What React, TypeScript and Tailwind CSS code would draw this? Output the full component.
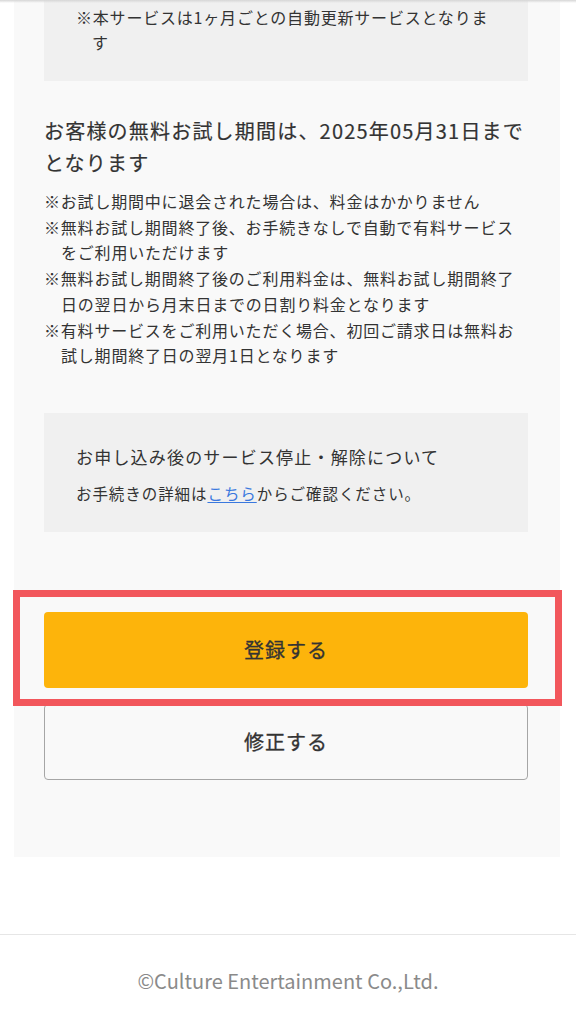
import React from "react";

const items: string[] = [
  "※お試し期間中に退会された場合は、料金はかかりません",
  "※無料お試し期間終了後、お手続きなしで自動で有料サービスをご利用いただけます",
  "※無料お試し期間終了後のご利用料金は、無料お試し期間終了日の翌日から月末日までの日割り料金となります",
  "※有料サービスをご利用いただく場合、初回ご請求日は無料お試し期間終了日の翌月1日となります",
];

export default function App() {
  return (
    <div
      className="relative min-h-screen bg-white text-[#333333]"
      style={{ fontFamily: '"Noto Sans CJK JP", "Noto Sans", sans-serif' }}
    >
      <div className="pointer-events-none absolute inset-x-0 top-0 h-[3px] bg-gradient-to-b from-[#d6d6d6] to-transparent" />

      <div className="ml-[14px] mr-[16px] bg-[#f9f9f9] pl-[30px] pr-[32px] pb-[77px]">
        <div className="bg-[#f0f0f0] px-[32px] pt-[5px] pb-[26px] text-[16px] leading-[25px] tracking-[0.05em]">
          <p className="pl-[16px] -indent-[16px]">※本サービスは1ヶ月ごとの自動更新サービスとなります</p>
        </div>

        <h2 className="mt-[34px] text-[20px] font-normal leading-[32px] tracking-[0.06em] [-webkit-text-stroke:0.2px_#333333]">
          お客様の無料お試し期間は、2025年05月31日までとなります
        </h2>

        <div className="mt-[10px] text-[16px] leading-[25.7px] tracking-[0.05em]">
          {items.map((t) => (
            <p key={t} className="pl-[17px] -indent-[17px]">
              {t}
            </p>
          ))}
        </div>

        <div className="mt-[44px] bg-[#f0f0f0] px-[32px] pt-[30px] pb-[26px]">
          <p className="text-[17px] leading-[28px] tracking-[0.07em]">
            お申し込み後のサービス停止・解除について
          </p>
          <p className="mt-[9px] text-[15.5px] leading-[26px] tracking-[0.06em]">
            お手続きの詳細は
            <a href="#" className="text-[#3a78de] underline underline-offset-2">
              こちら
            </a>
            からご確認ください。
          </p>
        </div>

        <div className="relative mt-[80px]">
          <button className="flex h-[76px] w-full items-center justify-center rounded-[4px] bg-[#fdb40b] text-[20px] font-normal tracking-[0.05em] text-[#333333] [-webkit-text-stroke:0.3px_#333333]">
            登録する
          </button>
          <div className="pointer-events-none absolute left-[-31px] right-[-34px] top-[-22px] h-[116px] border-[7px] border-[#f2575c]" />
        </div>

        <button className="mt-[16px] flex h-[76px] w-full items-center justify-center rounded-[4px] border-[1.5px] border-[#a6a6a6] bg-transparent text-[20px] font-normal tracking-[0.05em] text-[#333333] [-webkit-text-stroke:0.3px_#333333]">
          修正する
        </button>
      </div>

      <div className="mt-[77px] h-px bg-[#e6e6e6]" />
      <p className="mt-[32px] text-center text-[20px] leading-[28px] text-[#8a8a8a]">
        ©Culture Entertainment Co.,Ltd.
      </p>
    </div>
  );
}
